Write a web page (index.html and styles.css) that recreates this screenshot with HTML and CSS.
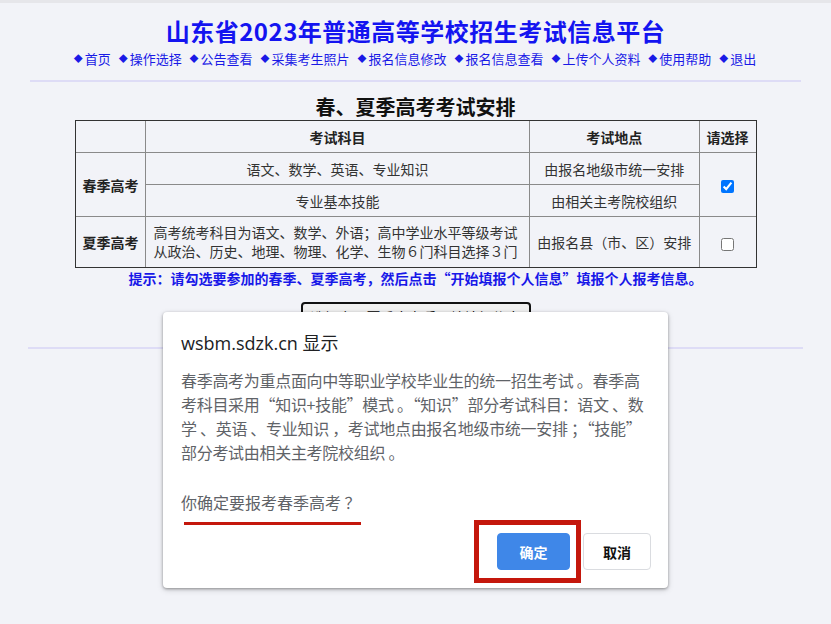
FILE: index.html
```html
<!DOCTYPE html>
<html lang="zh-CN">
  <head>
    <meta charset="UTF-8" />
    <title>山东省2023年普通高等学校招生考试信息平台</title>
    <link rel="stylesheet" href="styles.css">
  </head>
  <body>
    <div class="header">
      <h1 class="site-title">山东省2023年普通高等学校招生考试信息平台</h1>
      <div class="nav">
        <a href="#">首页</a>
        <a href="#">操作选择</a>
        <a href="#">公告查看</a>
        <a href="#">采集考生照片</a>
        <a href="#">报名信息修改</a>
        <a href="#">报名信息查看</a>
        <a href="#">上传个人资料</a>
        <a href="#">使用帮助</a>
        <a href="#">退出</a>
      </div>
    </div>
    <hr class="line" />
    <div class="main">
      <h2 class="caption">春、夏季高考考试安排</h2>
      <table class="plan">
        <tr>
          <th class="c1"></th>
          <th class="c2">考试科目</th>
          <th class="c3">考试地点</th>
          <th class="c4">请选择</th>
        </tr>
        <tr>
          <th rowspan="2">春季高考</th>
          <td>语文、数学、英语、专业知识</td>
          <td>由报名地级市统一安排</td>
          <td rowspan="2"><input type="checkbox" checked /></td>
        </tr>
        <tr>
          <td>专业基本技能</td>
          <td>由相关主考院校组织</td>
        </tr>
        <tr class="tall">
          <th>夏季高考</th>
          <td class="left">高考统考科目为语文、数学、外语；高中学业水平等级考试<br />从政治、历史、地理、物理、化学、生物６门科目选择３门</td>
          <td>由报名县（市、区）安排</td>
          <td><input type="checkbox" /></td>
        </tr>
      </table>
      <p class="tip">提示：请勾选要参加的春季、夏季高考，然后点击“开始填报个人信息”填报个人报考信息。</p>
      <button class="start-btn">选择春、夏季高考后开始填报信息</button>
    </div>
    <hr class="line line-2" />

    <div class="dialog">
      <div class="dialog-title">wsbm.sdzk.cn 显示</div>
      <div class="dialog-msg">春季高考为重点面向中等职业学校毕业生的统一招生考试 。春季高<br />考科目采用“知识+技能”模式 。“知识”部分考试科目：语文 、数<br />学 、英语 、专业知识 ，考试地点由报名地级市统一安排 ；“技能”<br />部分考试由相关主考院校组织 。</div>
      <div class="dialog-ask">你确定要报考春季高考 ？</div>
      <div class="dialog-btns">
        <button class="dbtn dbtn-ok">确定</button>
        <button class="dbtn dbtn-cancel">取消</button>
      </div>
      <div class="mark-line"></div>
      <div class="mark-box"></div>
    </div>
  </body>
</html>
```

FILE: styles.css
```css
* {
  box-sizing: border-box;
}
body {
  margin: 0;
  padding: 0;
  background: #f2f3f8;
  border-top: 3px solid #e6e6ea;
  font-family: "Noto Sans CJK SC", "Noto Sans", sans-serif;
  color: #222;
  font-size: 14px;
}

.header {
  text-align: center;
  padding-top: 12px;
}
.site-title {
  margin: 0;
  font-size: 24px;
  line-height: 32px;
  font-weight: bold;
  color: #1414f0;
  letter-spacing: 0.5px;
}
.nav {
  margin-top: 3px;
  font-size: 13px;
  line-height: 18px;
}
.nav a {
  color: #1a1ae6;
  text-decoration: none;
  margin-left: 2px;
  margin-right: 3px;
}
.nav a::before {
  content: "◆";
  font-size: 9px;
  vertical-align: 2px;
  margin-right: 2px;
}

.line {
  margin: 12px 30px 0;
  border: 0;
  border-top: 2px solid #dedcf6;
}
.line-2 {
  margin: 15px 28px 0;
}

.main {
  text-align: center;
}
.caption {
  margin: 12px 0 0;
  font-size: 20px;
  line-height: 26px;
  color: #111;
}

.plan {
  margin: 0 auto;
  width: 682px;
  border-collapse: collapse;
  outline: 1px solid #333;
  outline-offset: -1px;
  font-size: 14px;
  color: #333;
}
.plan th,
.plan td {
  border: 1px solid #8a8a8a;
  height: 32px;
  padding: 0;
  text-align: center;
}
.plan th {
  color: #222;
}
.plan .c1 { width: 71px; }
.plan .c2 { width: 384px; }
.plan .c3 { width: 170px; }
.plan .c4 { width: 57px; }
.plan .tall td,
.plan .tall th {
  height: 51px;
}
.plan .left {
  text-align: left;
  padding-left: 7px;
  line-height: 19px;
}
.plan input {
  margin: 0;
  width: 13px;
  height: 13px;
  vertical-align: middle;
}

.tip {
  margin: 0;
  font-size: 14px;
  line-height: 20px;
  font-weight: bold;
  color: #1818e8;
}
.start-btn {
  margin-top: 14px;
  height: 30px;
  padding: 0 8px;
  font-family: inherit;
  font-size: 14px;
  background: #f0f0f0;
  border: 2px solid #111;
  border-radius: 4px;
}

.dialog {
  position: absolute;
  left: 163px;
  top: 312px;
  width: 505px;
  height: 276px;
  background: #fff;
  border-radius: 4px;
  box-shadow: 0 1px 3px rgba(0, 0, 0, 0.35), 0 2px 6px rgba(0, 0, 0, 0.15);
  padding: 20px 17px 18px 18px;
  font-family: "Open Sans", "Noto Sans CJK SC", sans-serif;
}
.dialog-title {
  font-size: 18px;
  line-height: 22px;
  color: #202124;
}
.dialog-msg {
  margin-top: 14px;
  font-family: "Noto Sans CJK SC", sans-serif;
  font-size: 16px;
  line-height: 24px;
  color: #5f6368;
  white-space: nowrap;
  letter-spacing: -0.3px;
}
.dialog-ask {
  margin-top: 26px;
  font-family: "Noto Sans CJK SC", sans-serif;
  font-size: 16px;
  line-height: 24px;
  color: #5f6368;
}
.dialog-btns {
  margin-top: 19px;
  display: flex;
  justify-content: flex-end;
  gap: 13px;
}
.dbtn {
  height: 37px;
  border-radius: 4px;
  font-family: "Noto Sans CJK SC", sans-serif;
  font-size: 14px;
  font-weight: bold;
}
.dbtn-ok {
  width: 73px;
  background: #3f87e8;
  border: 1px solid #3f87e8;
  color: #fff;
}
.dbtn-cancel {
  width: 68px;
  background: #fff;
  border: 1px solid #dadce0;
  color: #111;
}

.mark-line {
  position: absolute;
  left: 21px;
  top: 210px;
  width: 177px;
  height: 3px;
  background: #c4170c;
}
.mark-box {
  position: absolute;
  left: 311px;
  top: 208px;
  width: 107px;
  height: 63px;
  border: 5px solid #c4170c;
}
```
